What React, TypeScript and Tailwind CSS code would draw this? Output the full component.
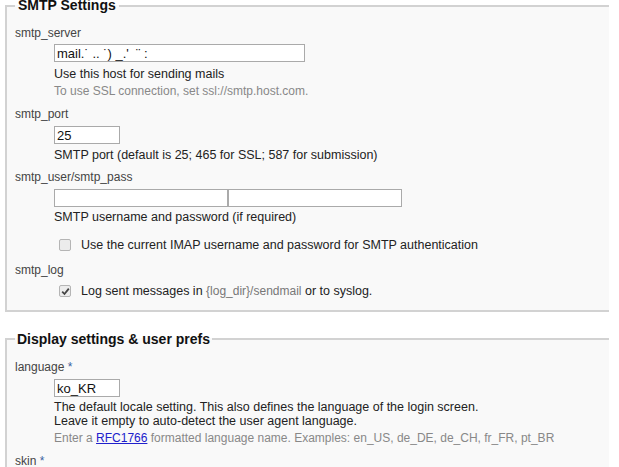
import React from 'react';

const font = { fontFamily: '"Liberation Sans", Arial, sans-serif' };

const Check = ({ checked }: { checked?: boolean }) => (
  <span className="inline-flex h-[12px] w-[12px] items-center justify-center rounded-[2px] border border-[#b5b5b5] bg-[#ececec]">
    {checked && (
      <svg width="9" height="9" viewBox="0 0 9 9">
        <path d="M1.2 4.6 L3.5 7 L7.8 1.6" fill="none" stroke="#444" strokeWidth="1.8" />
      </svg>
    )}
  </span>
);

const Label = ({ children, className = '' }: { children: React.ReactNode; className?: string }) => (
  <div className={`text-[12px] leading-[16px] text-[#444] ${className}`}>{children}</div>
);

const Desc = ({ children, className = '' }: { children: React.ReactNode; className?: string }) => (
  <div className={`ml-[39px] text-[12.5px] leading-[14px] text-[#222] ${className}`}>{children}</div>
);

const Hint = ({ children, className = '' }: { children: React.ReactNode; className?: string }) => (
  <div className={`ml-[39px] text-[12px] leading-[14px] text-[#888] ${className}`}>{children}</div>
);

const inputCls = 'block h-[18px] border border-[#aaa] bg-white px-[2px] text-[13px] leading-[16px] text-[#111] outline-none';

export default function App() {
  return (
    <div className="h-[467px] w-[619px] overflow-hidden bg-white" style={font}>
      {/* SMTP */}
      <fieldset className="ml-[5px] h-[312px] w-[604px] border-y-2 border-l-2 border-r-0 border-[#d2d2d2] bg-[#f9f9f9] pl-[8px]">
        <legend className="px-[3px] text-[14px] font-bold leading-[11px] text-[#111]">SMTP Settings</legend>
        <Label className="mt-[14px]">smtp_server</Label>
        <div className="ml-[39px] mt-[3px] flex">
          <input className={`${inputCls} w-[251px]`} defaultValue="mail.˙ .. ˙) _.'  ¨ :" />
        </div>
        <Desc className="mt-[5px]">Use this host for sending mails</Desc>
        <Hint className="mt-[3px]">To use SSL connection, set ssl://smtp.host.com.</Hint>

        <Label className="mt-[8px]">smtp_port</Label>
        <div className="ml-[39px] mt-[4px] flex">
          <input className={`${inputCls} w-[66px]`} defaultValue="25" />
        </div>
        <Desc className="mt-[4px]">SMTP port (default is 25; 465 for SSL; 587 for submission)</Desc>

        <Label className="mt-[7px]">smtp_user/smtp_pass</Label>
        <div className="ml-[39px] mt-[4px] flex">
          <input className={`${inputCls} w-[174px]`} />
          <input type="password" className={`${inputCls} w-[174px]`} />
        </div>
        <Desc className="mt-[3px]">SMTP username and password (if required)</Desc>

        <div className="ml-[44px] mt-[13px] flex items-center gap-[10px] text-[12.5px] leading-[16px] text-[#222]">
          <Check />
          <span>Use the current IMAP username and password for SMTP authentication</span>
        </div>

        <Label className="mt-[9px]">smtp_log</Label>
        <div className="ml-[44px] mt-[5px] flex items-center gap-[10px] text-[12.5px] leading-[16px] text-[#222]">
          <Check checked />
          <span>
            Log sent messages in <span className="text-[12px] text-[#777]">{'{log_dir}/sendmail'}</span> or to syslog.
          </span>
        </div>
      </fieldset>

      {/* Display */}
      <fieldset className="ml-[5px] mt-[22px] h-[200px] w-[604px] border-y-2 border-l-2 border-r-0 border-[#d2d2d2] bg-[#f9f9f9] pl-[8px]">
        <legend className="px-[2px] text-[14px] font-bold leading-[10px] text-[#111]">Display settings &amp; user prefs</legend>
        <Label className="mt-[15px]">
          language <span className="text-[#3a5fa0]">*</span>
        </Label>
        <div className="ml-[39px] mt-[4px] flex">
          <input
            className={`${inputCls} w-[66px] border-[#a9b7a3] bg-[#e8effb]`}
            defaultValue="ko_KR"
          />
        </div>
        <Desc className="mt-[3px] leading-[13px]">
          The default locale setting. This also defines the language of the login screen.
          <br />
          Leave it empty to auto-detect the user agent language.
        </Desc>
        <Hint className="mt-[3px]">
          Enter a{' '}
          <a href="#" className="text-[#2020cc] underline">
            RFC1766
          </a>{' '}
          formatted language name. Examples: en_US, de_DE, de_CH, fr_FR, pt_BR
        </Hint>
        <Label className="mt-[8px]">
          skin <span className="text-[#3a5fa0]">*</span>
        </Label>
      </fieldset>
    </div>
  );
}
